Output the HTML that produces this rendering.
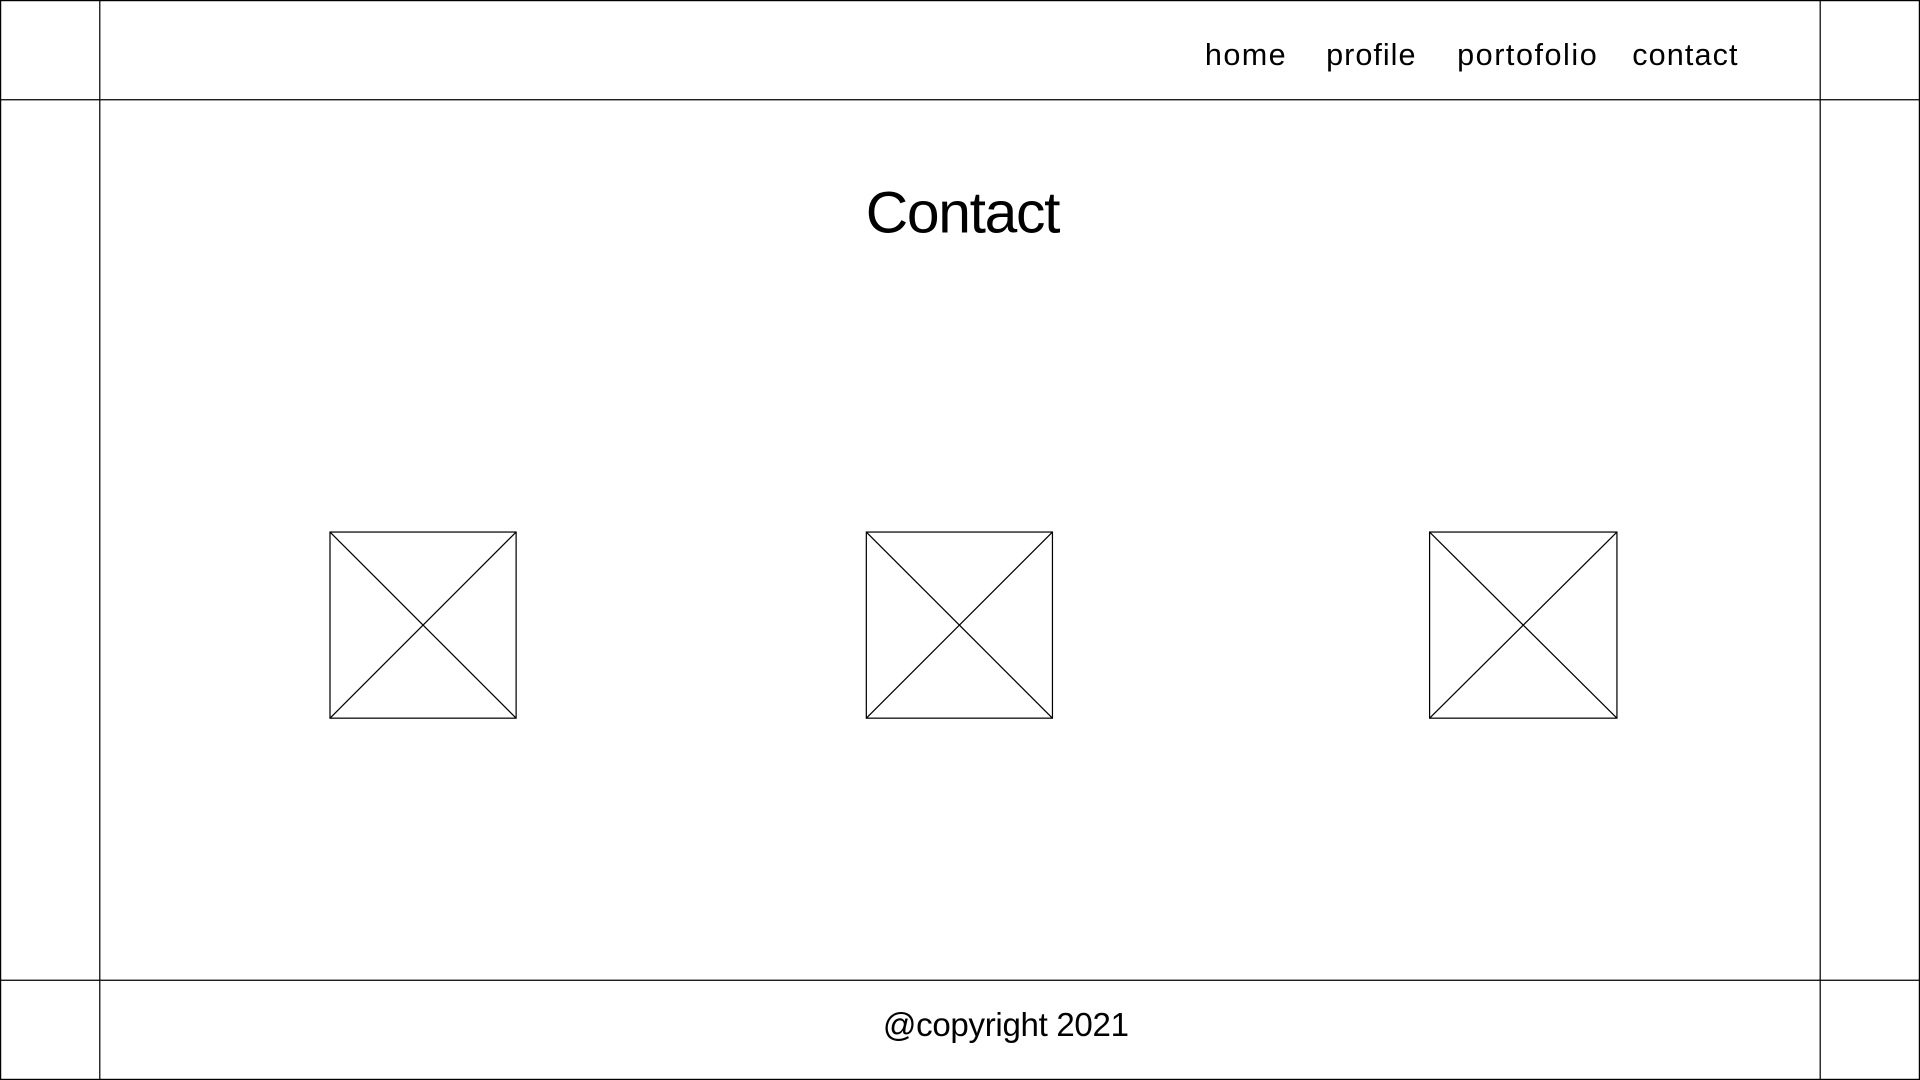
<!DOCTYPE html>
<html><head><meta charset="utf-8"><style>
html,body{margin:0;padding:0;background:#fff;overflow:hidden}
svg{display:block;width:100vw;height:100vh}
text{font-family:"Liberation Sans",sans-serif;fill:#000}
</style></head><body>
<svg viewBox="0 0 1568 882" preserveAspectRatio="none" xmlns="http://www.w3.org/2000/svg">
<g stroke="#000" stroke-width="1" fill="none">
<rect x="0.5" y="0.5" width="1567" height="881"/>
<line x1="81.5" y1="0" x2="81.5" y2="882"/>
<line x1="1486.5" y1="0" x2="1486.5" y2="882"/>
<line x1="0" y1="81.5" x2="1568" y2="81.5"/>
<line x1="0" y1="800.5" x2="1568" y2="800.5"/>
<rect x="269.5" y="434.5" width="152" height="152"/>
<line x1="269.5" y1="434.5" x2="421.5" y2="586.5"/><line x1="421.5" y1="434.5" x2="269.5" y2="586.5"/>
<rect x="707.5" y="434.5" width="152" height="152"/>
<line x1="707.5" y1="434.5" x2="859.5" y2="586.5"/><line x1="859.5" y1="434.5" x2="707.5" y2="586.5"/>
<rect x="1167.5" y="434.5" width="153" height="152"/>
<line x1="1167.5" y1="434.5" x2="1320.5" y2="586.5"/><line x1="1320.5" y1="434.5" x2="1167.5" y2="586.5"/>
</g>
<text x="984" y="53" font-size="25" textLength="66">home</text>
<text x="1083" y="53" font-size="25" textLength="73">profile</text>
<text x="1190" y="53" font-size="25" textLength="114">portofolio</text>
<text x="1333" y="53" font-size="25" textLength="86">contact</text>
<text x="707" y="190" font-size="48" textLength="159">Contact</text>
<text x="721" y="846" font-size="27" textLength="201">@copyright 2021</text>
</svg>
</body></html>
